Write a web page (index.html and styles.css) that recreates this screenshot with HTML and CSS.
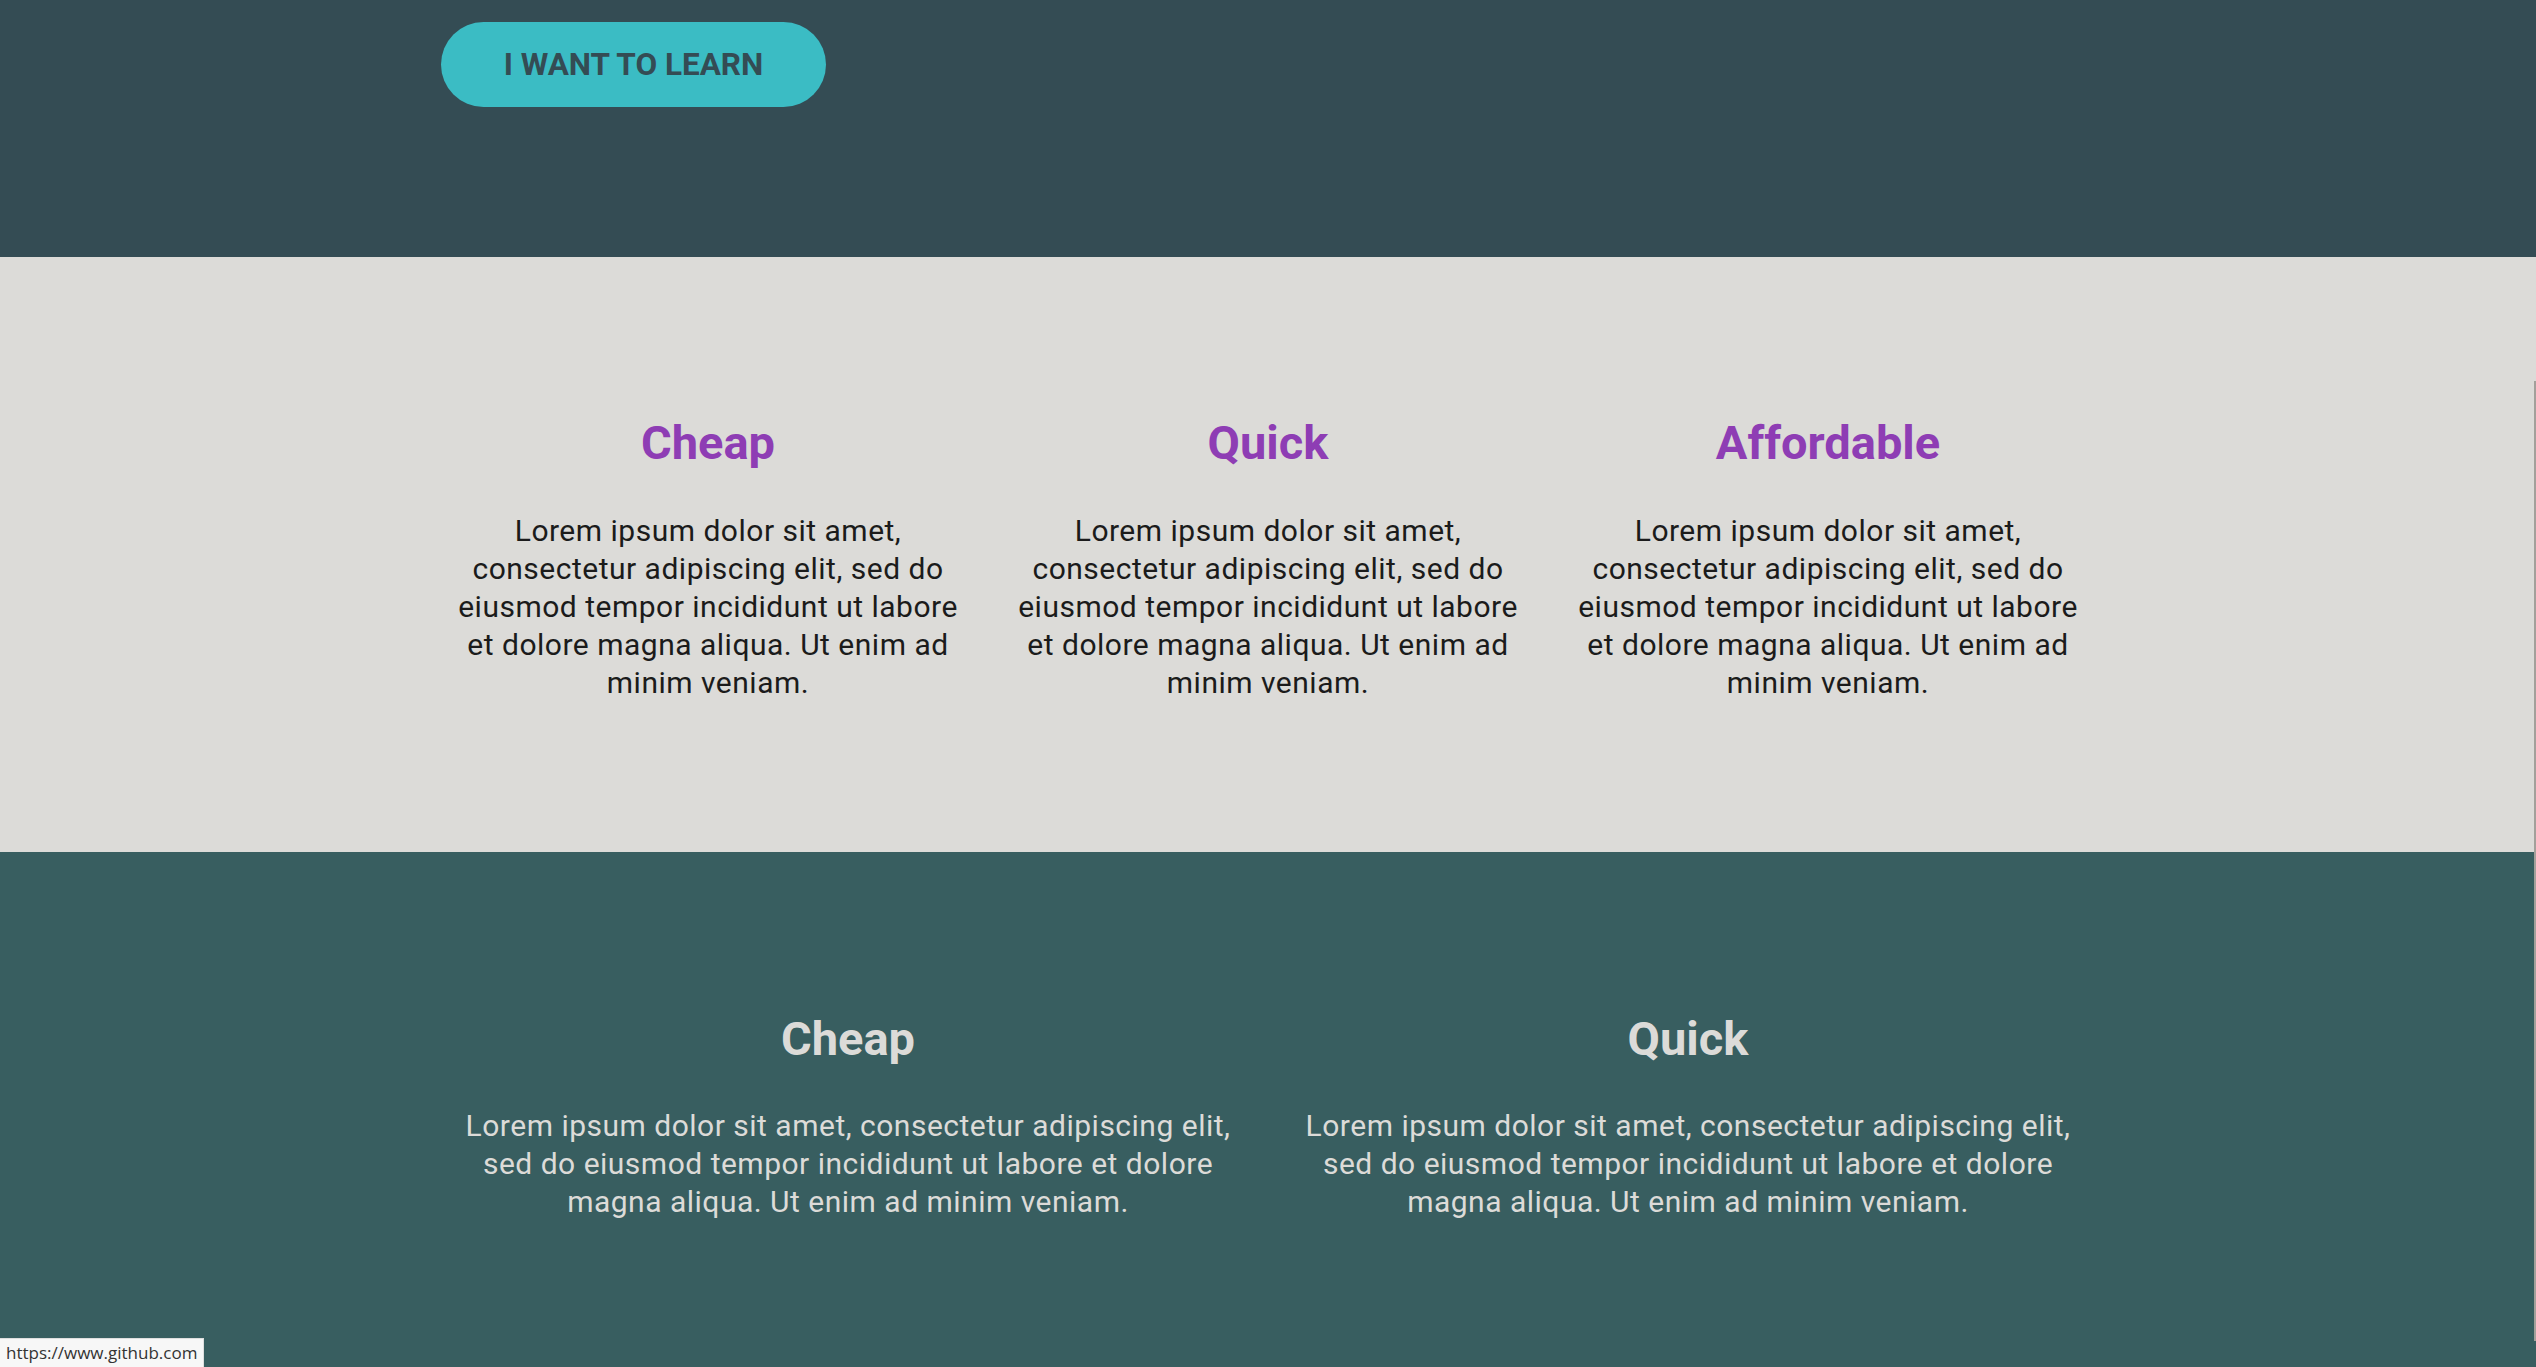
FILE: index.html
```html
<!DOCTYPE html>
<html lang="en">
<head>
<meta charset="utf-8">
<title>Learn</title>
<link rel="stylesheet" href="styles.css">
</head>
<body>
<header class="hero">
  <div class="container">
    <a class="btn" href="#">I WANT TO LEARN</a>
  </div>
</header>
<section class="features">
  <div class="container grid-3">
    <div class="feature">
      <h2 class="feature-title">Cheap</h2>
      <p class="feature-text">Lorem ipsum dolor sit amet, consectetur adipiscing elit, sed do eiusmod tempor incididunt ut labore et dolore magna aliqua. Ut enim ad minim veniam.</p>
    </div>
    <div class="feature">
      <h2 class="feature-title">Quick</h2>
      <p class="feature-text">Lorem ipsum dolor sit amet, consectetur adipiscing elit, sed do eiusmod tempor incididunt ut labore et dolore magna aliqua. Ut enim ad minim veniam.</p>
    </div>
    <div class="feature">
      <h2 class="feature-title">Affordable</h2>
      <p class="feature-text">Lorem ipsum dolor sit amet, consectetur adipiscing elit, sed do eiusmod tempor incididunt ut labore et dolore magna aliqua. Ut enim ad minim veniam.</p>
    </div>
  </div>
</section>
<section class="features features-dark">
  <div class="container grid-2">
    <div class="feature">
      <h2 class="feature-title">Cheap</h2>
      <p class="feature-text">Lorem ipsum dolor sit amet, consectetur adipiscing elit, sed do eiusmod tempor incididunt ut labore et dolore magna aliqua. Ut enim ad minim veniam.</p>
    </div>
    <div class="feature">
      <h2 class="feature-title">Quick</h2>
      <p class="feature-text">Lorem ipsum dolor sit amet, consectetur adipiscing elit, sed do eiusmod tempor incididunt ut labore et dolore magna aliqua. Ut enim ad minim veniam.</p>
    </div>
  </div>
</section>
<div class="status-bubble">https://www.github.com</div>
<div class="scroll-thumb"></div>
</body>
</html>
```

FILE: styles.css
```css
html, body {
  margin: 0;
  padding: 0;
}
body {
  font-family: Roboto, "Liberation Sans", sans-serif;
  background: #385e60;
  overflow: hidden;
}
.container {
  width: 1680px;
  margin: 0 auto;
}
.hero {
  background: #344c54;
  padding: 22px 0 150px;
}
.btn {
  display: inline-flex;
  align-items: center;
  justify-content: center;
  box-sizing: border-box;
  width: 385px;
  height: 85px;
  margin-left: 13px;
  border-radius: 43px;
  background: #3bbcc4;
  color: #344c54;
  font-size: 31.5px;
  font-weight: 700;
  text-decoration: none;
}
.features {
  background: #dcdbd8;
  padding: 158px 0 150px;
}
.grid-3 {
  display: grid;
  grid-template-columns: repeat(3, 1fr);
}
.grid-2 {
  display: grid;
  grid-template-columns: repeat(2, 1fr);
}
.feature {
  padding: 0 30px;
  text-align: center;
}
.feature-title {
  margin: 0;
  font-size: 47px;
  line-height: 56px;
  font-weight: 700;
  color: #8e3db4;
}
.feature-text {
  margin: 41px 0 0;
  font-size: 30px;
  line-height: 38px;
  letter-spacing: 0.5px;
  color: #1b1b1b;
}
.features-dark {
  background: #385e60;
  padding-top: 159px;
}
.features-dark .feature-text {
  margin-top: 40px;
}
.features-dark .feature-title,
.features-dark .feature-text {
  color: #dcdbd8;
}
.status-bubble {
  position: fixed;
  left: 0;
  bottom: 0;
  box-sizing: border-box;
  height: 29px;
  padding: 2px 6px 0 6px;
  background: #f7f7f7;
  border-top: 1px solid #dedede;
  border-right: 1px solid #dedede;
  font-family: "Open Sans", "DejaVu Sans", sans-serif;
  font-size: 17px;
  color: #333;
}
.scroll-thumb {
  position: fixed;
  right: 0;
  top: 381px;
  width: 2px;
  height: 960px;
  background: #a3a09b;
}
```
